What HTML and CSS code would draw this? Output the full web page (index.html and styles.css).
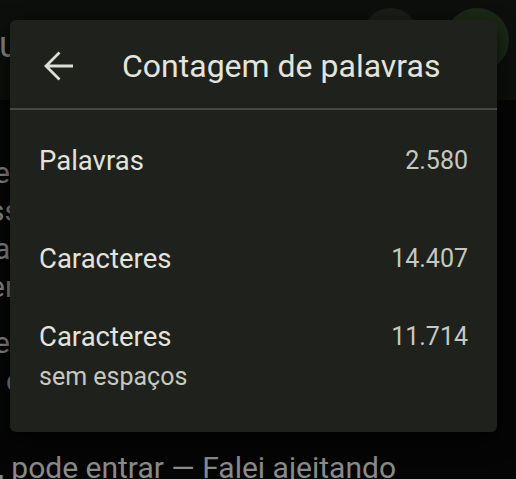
FILE: index.html
```
<!DOCTYPE html>
<html lang="pt">
<head>
    <meta charset="UTF-8">
    <meta name="viewport" content="width=device-width, initial-scale=1.0">
    <title>Contagem de palavras</title>
    <link rel="stylesheet" href="styles.css">
</head>
<body>
    <div class="screen">
        <header class="topbar">
            <span class="topbar-title">u</span>
            <div class="topbar-actions">
                <span class="round-btn"></span>
                <span class="round-btn avatar"></span>
            </div>
        </header>
        <div class="doc">
            <p>e</p>
            <p class="tight">ss</p>
            <p>a</p>
            <p class="tight">er</p>
            <p class="para">e</p>
            <p class="indent">c</p>
            <p class="para-last">, pode entrar — Falei ajeitando</p>
        </div>

        <div class="dialog">
            <div class="dialog-head">
                <svg class="back" width="32" height="32" viewBox="0 0 32 32">
                    <path d="M30 16H3M16.5 2.5L3 16l13.5 13.5" fill="none" stroke="currentColor" stroke-width="2.8"/>
                </svg>
                <h1>Contagem de palavras</h1>
            </div>
            <div class="stats">
                <div class="stat">
                    <span class="label">Palavras</span>
                    <span class="value">2.580</span>
                </div>
                <div class="stat">
                    <span class="label">Caracteres</span>
                    <span class="value">14.407</span>
                </div>
                <div class="stat">
                    <span class="label">Caracteres<small>sem espaços</small></span>
                    <span class="value">11.714</span>
                </div>
            </div>
        </div>
    </div>
</body>
</html>
```

FILE: styles.css
```
* { margin: 0; padding: 0; box-sizing: border-box; }

body {
    background: #050505;
    font-family: Roboto, "Liberation Sans", sans-serif;
    overflow: hidden;
}

.screen {
    position: relative;
    width: 516px;
    height: 479px;
    overflow: hidden;
}

.topbar {
    height: 100px;
    background: #0d0f0c;
    display: flex;
    justify-content: space-between;
    align-items: flex-start;
}

.topbar-title {
    color: #8b8d88;
    font-size: 36px;
    margin-top: 24px;
    margin-left: -1px;
}

.topbar-actions {
    display: flex;
    gap: 27px;
    margin-top: 8px;
    margin-right: 7px;
}

.round-btn {
    width: 55px;
    height: 55px;
    border-radius: 50%;
    background: #1a1c17;
}

.round-btn.avatar {
    width: 64px;
    height: 64px;
    background: #1b2916;
}

.doc {
    padding-top: 54px;
    color: #8a8a8a;
    font-size: 30px;
    line-height: 38px;
}

.doc p {
    margin-left: -6px;
    white-space: nowrap;
}

.doc .tight {
    margin-left: -11px;
}

.doc .para {
    margin-top: 18px;
}

.doc .indent {
    margin-left: 6px;
}

.doc .para-last {
    margin-top: 49px;
    margin-left: -2px;
}

.dialog {
    position: absolute;
    left: 10px;
    top: 20px;
    width: 487px;
    height: 412px;
    background: #1f211c;
    border-radius: 6px;
    box-shadow: 0 8px 22px rgba(0, 0, 0, 0.75);
}

.dialog-head {
    height: 90px;
    display: flex;
    align-items: center;
    padding-left: 33px;
    padding-top: 4px;
    border-bottom: 2px solid #474a44;
    color: #e3e4dd;
}

.back {
    color: #dcdfd6;
}

.dialog-head h1 {
    font-weight: 400;
    font-size: 32px;
    margin-left: 47px;
}

.stats {
    padding: 33px 29px 0 29px;
}

.stat {
    display: flex;
    justify-content: space-between;
    align-items: flex-start;
    color: #e2e3dc;
    font-size: 27.5px;
    line-height: 36px;
    height: 98px;
}

.stat:nth-child(2) {
    height: 78px;
}

.label small {
    display: block;
    font-size: 25px;
    line-height: 30px;
    color: #c6c8c0;
    margin-top: 7px;
}

.value {
    color: #c6c8c0;
    font-size: 25px;
}
```
